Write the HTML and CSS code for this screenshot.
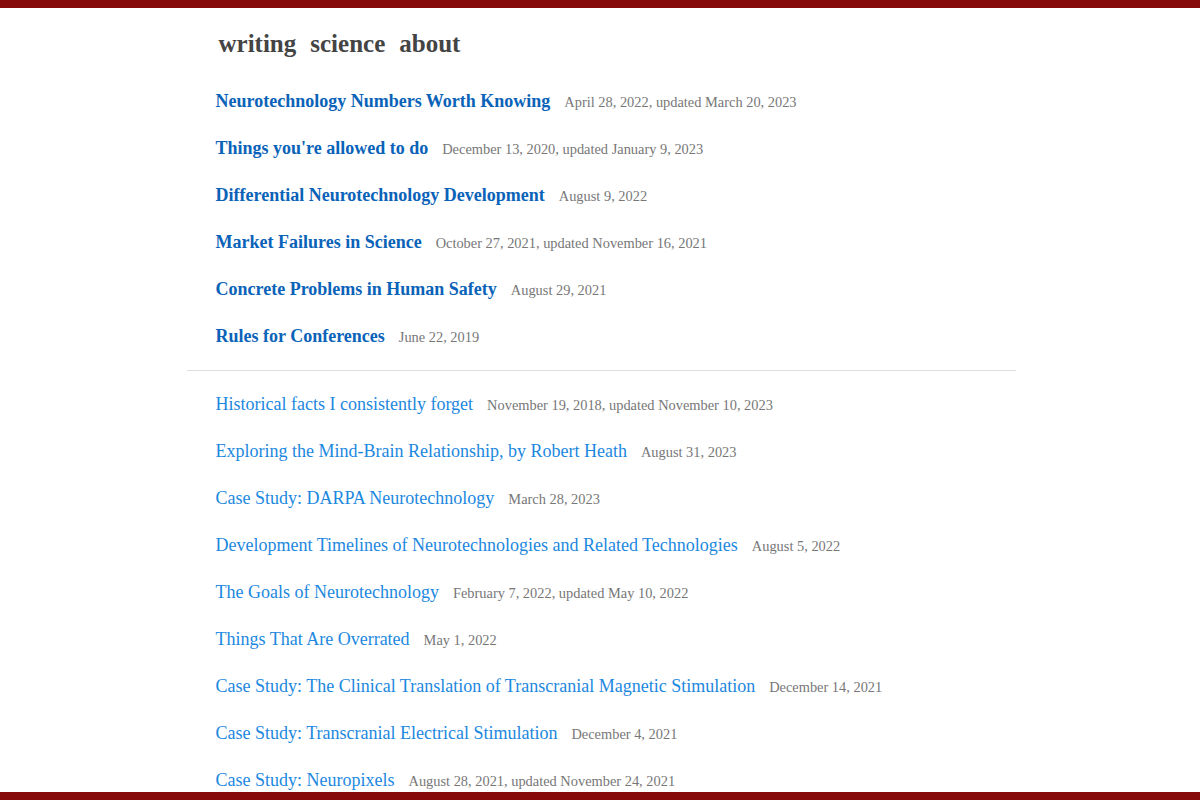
FILE: index.html
```html
<!DOCTYPE html>
<html lang="en">
<head>
  <meta charset="UTF-8">
  <title>writing</title>
  <meta name="viewport" content="width=device-width, initial-scale=1.0">
  <link rel="stylesheet" href="styles.css">
</head>
<body>

  <div class="topbar"></div>

  <div class="page">
    <nav class="nav">
      <a href="#">writing</a>
      <a href="#">science</a>
      <a href="#">about</a>
    </nav>

    <!-- pinned posts -->
    <ul class="posts featured">
      <li><a href="#">Neurotechnology Numbers Worth Knowing</a><span class="date">April 28, 2022, updated March 20, 2023</span></li>
      <li><a href="#">Things you're allowed to do</a><span class="date">December 13, 2020, updated January 9, 2023</span></li>
      <li><a href="#">Differential Neurotechnology Development</a><span class="date">August 9, 2022</span></li>
      <li><a href="#">Market Failures in Science</a><span class="date">October 27, 2021, updated November 16, 2021</span></li>
      <li><a href="#">Concrete Problems in Human Safety</a><span class="date">August 29, 2021</span></li>
      <li><a href="#">Rules for Conferences</a><span class="date">June 22, 2019</span></li>
    </ul>

    <hr class="divider">

    <!-- everything else, newest first -->
    <ul class="posts">
      <li><a href="#">Historical facts I consistently forget</a><span class="date">November 19, 2018, updated November 10, 2023</span></li>
      <li><a href="#">Exploring the Mind-Brain Relationship, by Robert Heath</a><span class="date">August 31, 2023</span></li>
      <li><a href="#">Case Study: DARPA Neurotechnology</a><span class="date">March 28, 2023</span></li>
      <li><a href="#">Development Timelines of Neurotechnologies and Related Technologies</a><span class="date">August 5, 2022</span></li>
      <li><a href="#">The Goals of Neurotechnology</a><span class="date">February 7, 2022, updated May 10, 2022</span></li>
      <li><a href="#">Things That Are Overrated</a><span class="date">May 1, 2022</span></li>
      <li><a href="#">Case Study: The Clinical Translation of Transcranial Magnetic Stimulation</a><span class="date">December 14, 2021</span></li>
      <li><a href="#">Case Study: Transcranial Electrical Stimulation</a><span class="date">December 4, 2021</span></li>
      <li><a href="#">Case Study: Neuropixels</a><span class="date">August 28, 2021, updated November 24, 2021</span></li>
    </ul>
  </div>

  <div class="bottombar"></div>

</body>
</html>
```

FILE: styles.css
```css
body { margin:0; font-family:"Liberation Serif", "Times New Roman", serif; background:#fff; color:#333; }
.topbar { height:8px; background:#870a0a; }
.bottombar { position:fixed; left:0; right:0; bottom:0; height:8px; background:#870a0a; }
.page { max-width:829px; margin:0 auto; padding:0 0 30px 2px; }

.nav { padding:20px 0 0 32px; display:flex; gap:14px; }
.nav a { font-size:25px; font-weight:bold; color:#444; text-decoration:none; line-height:32px; }

.posts { list-style:none; margin:0; padding:0 0 0 29px; }
.posts li { height:27px; line-height:27px; margin-bottom:20px; white-space:nowrap; }
.posts a { font-size:18px; color:#1c88e0; text-decoration:none; }
.featured { margin-top:28px; }
.featured a { font-weight:bold; color:#0a63b8; }
.date { font-size:14.4px; color:#777; margin-left:14px; }

.divider { border:0; border-top:1px solid #ddd; margin:0 0 20px; }
```
